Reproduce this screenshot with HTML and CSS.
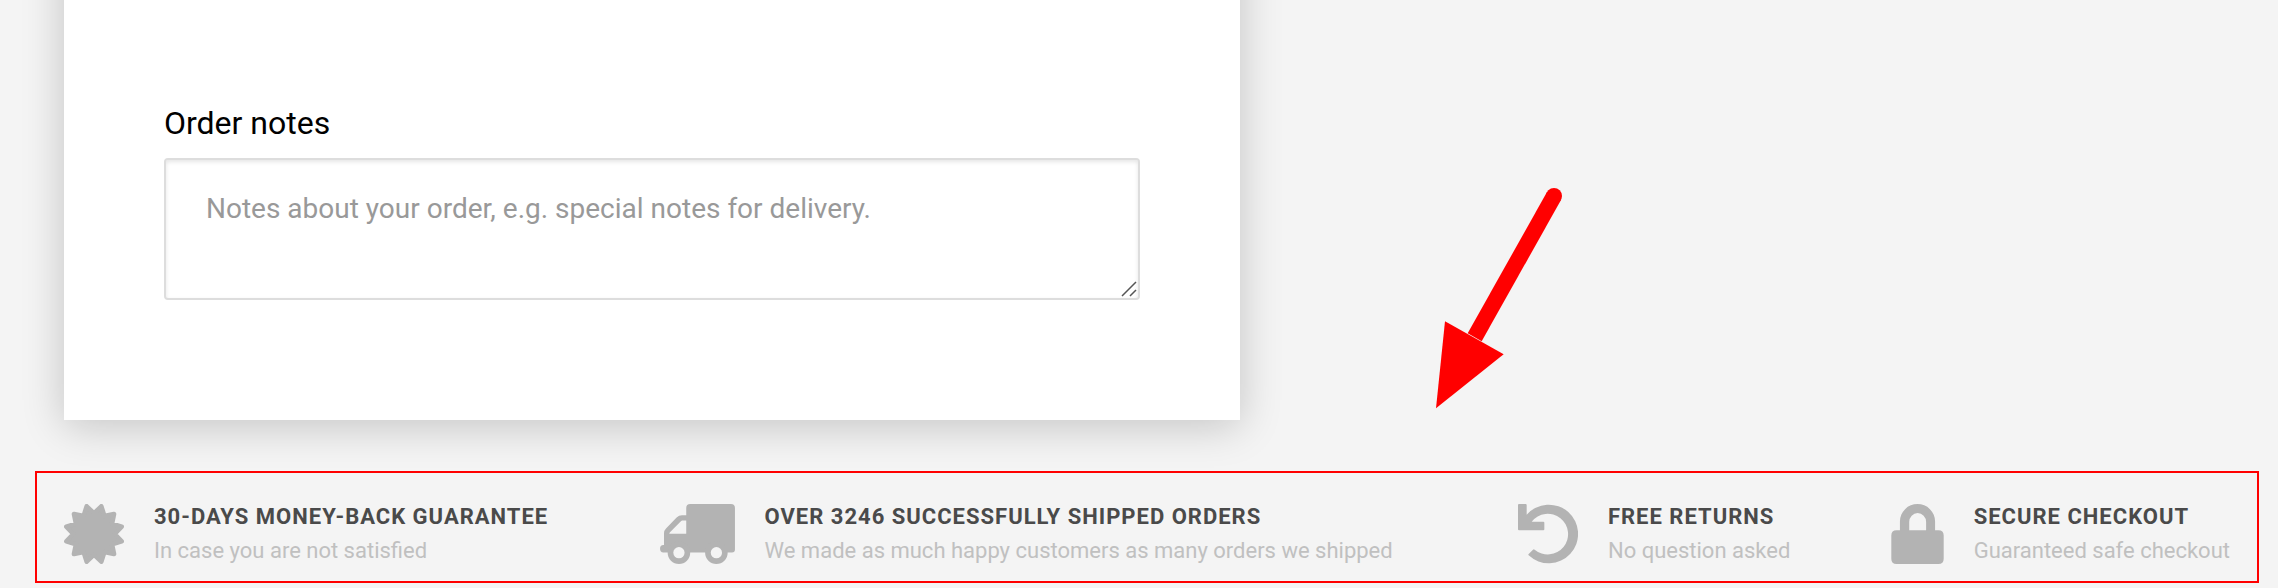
FILE: index.html
```html
<!DOCTYPE html>
<html lang="en">
<head>
    <meta charset="UTF-8" />
    <meta name="viewport" content="width=device-width, initial-scale=1.0" />
    <title>Checkout</title>
    <link rel="stylesheet" href="styles.css">
</head>
<body>
    <main class="checkout">
        <form class="card">
            <label for="order-notes">Order notes</label>
            <div class="field">
                <textarea id="order-notes" placeholder="Notes about your order, e.g. special notes for delivery."></textarea>
                <svg class="grip" viewBox="0 0 16 16" aria-hidden="true">
                    <path d="M1 15L15 1M9 15L15 9" />
                </svg>
            </div>
        </form>
    </main>
    <ul class="features">
        <li class="feature">
            <svg class="icon" viewBox="-90 -90 180 180" aria-hidden="true">
                <path class="burst" d="M0-62L22-83L31-54L60-60L54-31L83-22L62 0L83 22L54 31L60 60L31 54L22 83L0 62L-22 83L-31 54L-60 60L-54 31L-83 22L-62 0L-83-22L-54-31L-60-60L-31-54L-22-83Z" />
            </svg>
            <div class="text">
                <h3>30-days money-back guarantee</h3>
                <p>In case you are not satisfied</p>
            </div>
        </li>
        <li class="feature">
            <svg class="icon icon-truck" viewBox="30 40 226 181" aria-hidden="true">
                <path d="M121 40H244Q256 40 256 52V177Q256 186 247 186H40Q30 186 30 175Q30 164 40 164H42V128Q42 120 48 114L80 81Q87 74 96 74H109V52Q109 40 121 40Z" />
                <path class="hole" d="M109 90H97Q95 90 93 92L60 125Q58 127 58 130H109Z" />
                <circle cx="87" cy="187" r="34" />
                <circle cx="200" cy="187" r="34" />
                <circle class="hole" cx="87" cy="187" r="17" />
                <circle class="hole" cx="200" cy="187" r="17" />
            </svg>
            <div class="text">
                <h3>Over 3246 successfully shipped orders</h3>
                <p>We made as much happy customers as many orders we shipped</p>
            </div>
        </li>
        <li class="feature">
            <svg class="icon" viewBox="55 40 180 180" aria-hidden="true">
                <path d="M81 72A88 88 0 1 1 87 194Q85 192 87 190L100 177Q102 175 105 177A61 61 0 1 0 96 93H131Q134 93 134 96V116Q134 119 131 119H58Q55 119 55 116V43Q55 40 58 40H78Q81 40 81 43Z" />
            </svg>
            <div class="text">
                <h3>Free returns</h3>
                <p>No question asked</p>
            </div>
        </li>
        <li class="feature">
            <svg class="icon icon-lock" viewBox="65 40 158 181" aria-hidden="true">
                <path fill-rule="evenodd" d="M91 119V93A53 53 0 0 1 197 93V119H207Q223 119 223 135V205Q223 221 207 221H81Q65 221 65 205V135Q65 119 81 119ZM119 119H170V94A25 26 0 0 0 119 94Z" />
            </svg>
            <div class="text">
                <h3>Secure checkout</h3>
                <p>Guaranteed safe checkout</p>
            </div>
        </li>
    </ul>
    <svg class="arrow" viewBox="108 83 378 663" aria-hidden="true">
        <circle cx="462" cy="107" r="24" />
        <path d="M441 95L203 519L245 543L483 119Z" />
        <path d="M135 483L311 582L108 744Z" />
    </svg>
</body>
</html>
```
FILE: styles.css
```css
html, body {
    margin: 0;
    padding: 0;
}
body {
    position: relative;
    background: #f4f4f4;
    font-family: Roboto, "Liberation Sans", sans-serif;
    overflow-x: hidden;
}
.checkout {
    padding: 0 64px;
    display: flow-root;
}
.card {
    box-sizing: border-box;
    width: 54.7%;
    margin-top: -60px;
    padding: 163px 100px 120px;
    background: #fff;
    box-shadow: 0 6px 40px rgba(0, 0, 0, 0.2);
}
.card label {
    display: block;
    margin-bottom: 15px;
    font-size: 32px;
    line-height: 40px;
    color: #000;
}
.field {
    position: relative;
}
.field textarea {
    display: block;
    box-sizing: border-box;
    width: 100%;
    height: 142px;
    padding: 29px 40px;
    border: 2px solid #ddd;
    border-radius: 4px;
    box-shadow: inset 0 2px 4px rgba(0, 0, 0, 0.1);
    background: #fff;
    font-family: inherit;
    font-size: 28px;
    line-height: 40px;
    color: #333;
    resize: vertical;
}
.field textarea::placeholder {
    color: #999;
}
.field textarea::-webkit-resizer {
    background: transparent;
}
.grip {
    position: absolute;
    right: 3px;
    bottom: 3px;
    width: 16px;
    height: 16px;
    fill: none;
    stroke: #555;
    stroke-width: 1.5;
    pointer-events: none;
}
.features {
    display: grid;
    grid-template-columns: 596fr 859fr 373fr 338fr;
    margin: 51px 19px 0 35px;
    padding: 27px 27px 13px;
    border: 2px solid #f00;
    list-style: none;
}
.feature {
    display: flex;
    align-items: center;
    gap: 30px;
    white-space: nowrap;
}
.icon {
    flex: none;
    width: 60px;
    height: 60px;
    fill: #b3b3b3;
}
.icon-truck {
    width: 75px;
}
.icon-lock {
    width: 53px;
}
.burst {
    stroke: #b3b3b3;
    stroke-width: 14;
    stroke-linejoin: round;
}
.hole {
    fill: #f4f4f4;
}
.text h3,
.text p {
    margin: 0;
    font-size: 22px;
    line-height: 34px;
}
.text h3 {
    font-weight: 700;
    letter-spacing: 1px;
    text-transform: uppercase;
    color: #4a4a4a;
}
.text p {
    color: #c0c0c0;
}
.arrow {
    position: absolute;
    left: 1436px;
    top: 188px;
    width: 126px;
    height: 221px;
    fill: #f00;
}
```
